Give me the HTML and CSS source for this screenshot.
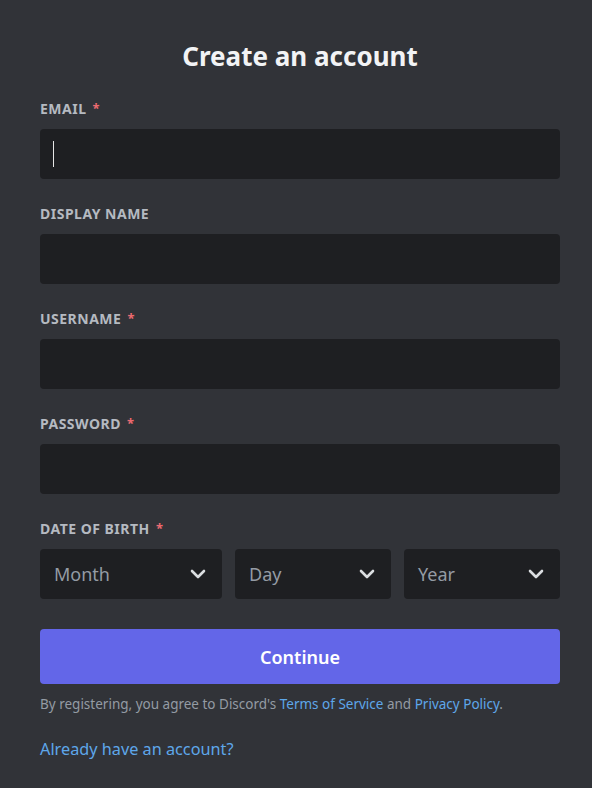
FILE: index.html
```html
<!DOCTYPE html>
<html>
<head>
<meta charset="utf-8">
<link rel="stylesheet" href="styles.css">
</head>
<body>
<main class="auth">
  <h1 class="title">Create an account</h1>

  <div class="field">
    <div class="label">Email <span class="req">*</span></div>
    <div class="input"><span class="caret"></span></div>
  </div>

  <div class="field">
    <div class="label">Display Name</div>
    <div class="input"></div>
  </div>

  <div class="field">
    <div class="label">Username <span class="req">*</span></div>
    <div class="input"></div>
  </div>

  <div class="field">
    <div class="label">Password <span class="req">*</span></div>
    <div class="input"></div>
  </div>

  <div class="field">
    <div class="label">Date of Birth <span class="req">*</span></div>
    <div class="dob">
      <div class="select month"><span>Month</span>
        <svg class="chev" viewBox="0 0 16 10" width="16" height="10"><polyline points="2,2 8,8 14,2" fill="none" stroke="#dbdee1" stroke-width="2.6" stroke-linecap="round" stroke-linejoin="round"/></svg>
      </div>
      <div class="select day"><span>Day</span>
        <svg class="chev" viewBox="0 0 16 10" width="16" height="10"><polyline points="2,2 8,8 14,2" fill="none" stroke="#dbdee1" stroke-width="2.6" stroke-linecap="round" stroke-linejoin="round"/></svg>
      </div>
      <div class="select year"><span>Year</span>
        <svg class="chev" viewBox="0 0 16 10" width="16" height="10"><polyline points="2,2 8,8 14,2" fill="none" stroke="#dbdee1" stroke-width="2.6" stroke-linecap="round" stroke-linejoin="round"/></svg>
      </div>
    </div>
  </div>

  <button class="btn">Continue</button>

  <p class="terms">By registering, you agree to Discord's <a href="#">Terms of Service</a> and <a href="#">Privacy Policy</a>.</p>

  <a class="login" href="#">Already have an account?</a>
</main>
</body>
</html>
```

FILE: styles.css
```css
html, body {
  margin: 0;
  padding: 0;
  background: #313338;
  font-family: "Noto Sans", "Open Sans", sans-serif;
}
.auth {
  width: 520px;
  padding: 37px 36px 0 40px;
  display: flex;
  flex-direction: column;
}
.title {
  margin: 0 0 24px;
  text-align: center;
  font-size: 26px;
  line-height: 38px;
  font-weight: 700;
  color: #f2f3f5;
}
.field {
  margin-bottom: 25px;
}
.label {
  font-size: 14px;
  line-height: 20px;
  font-weight: 700;
  text-transform: uppercase;
  color: #b5bac1;
  margin-bottom: 10px;
  letter-spacing: 0.035em;
}
.req {
  color: #ec6a70;
  padding-left: 2px;
  font-size: 13px;
  position: relative;
  top: -1px;
}
.input {
  height: 50px;
  background: #1e1f22;
  border-radius: 4px;
  box-sizing: border-box;
  padding: 12px 13px;
  display: flex;
  align-items: center;
}
.caret {
  width: 1px;
  height: 26px;
  background: #e6e6e6;
}
.dob {
  display: flex;
  justify-content: space-between;
}
.select {
  height: 50px;
  background: #1e1f22;
  border-radius: 4px;
  box-sizing: border-box;
  padding: 0 14px;
  display: flex;
  align-items: center;
  justify-content: space-between;
  font-size: 18px;
  color: #949ba4;
}
.month { width: 182px; }
.day, .year { width: 156px; }
.chev { margin-right: 2px; }
.btn {
  margin-top: 5px;
  height: 55px;
  border: 0;
  border-radius: 4px;
  background: #6366e8;
  color: #ffffff;
  font-family: inherit;
  font-size: 18px;
  font-weight: 600;
}
.terms {
  margin: 10px 0 0;
  font-size: 13.5px;
  line-height: 20px;
  color: #949ba4;
}
.terms a {
  color: #5ea7ea;
  text-decoration: none;
}
.login {
  margin-top: 25px;
  font-size: 16.25px;
  line-height: 20px;
  color: #5ea7ea;
  text-decoration: none;
  align-self: flex-start;
}
```
